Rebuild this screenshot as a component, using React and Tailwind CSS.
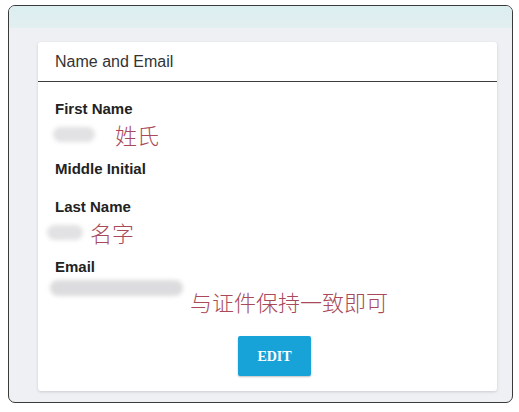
import React from "react"

const Label = ({ children, className = "" }) => (
  <div className={`text-[15px] font-bold leading-[18px] text-[#222] ${className}`}>{children}</div>
)

const Blur = ({ className = "" }) => <div className={`rounded-full bg-[#dcdcde] blur-[2px] ${className}`} />

const Note = ({ children, className = "" }) => (
  <span
    className={`text-[22px] font-light leading-none text-[#a84a5a] ${className}`}
    style={{ fontFamily: '"Noto Sans CJK SC", sans-serif' }}
  >
    {children}
  </span>
)

export default function App() {
  return (
    <div
      className="w-[519px] h-[412px] bg-white pt-[5px] pl-[8px]"
      style={{ fontFamily: '"Liberation Sans", Arial, sans-serif' }}
    >
      <div className="w-[505px] h-[398px] border border-[#3a3a3a] rounded-[7px] overflow-hidden bg-[#eef0f3] flex flex-col">
        <div className="h-[22px] bg-gradient-to-b from-[#dbeef0] to-[#e3eff1] shrink-0" />
        <div className="flex-1 pt-[14px] pl-[29px] pr-[15px] pb-[10px]">
          <div className="h-[349px] bg-white rounded-[3px] shadow-[0_1px_3px_rgba(0,0,0,0.15)]">
            <div className="h-[40px] border-b border-[#3d3d3d] pl-[17px] flex items-center">
              <span className="text-[16px] text-[#333] pt-[1px]">Name and Email</span>
            </div>

            <div className="pl-[17px] pt-[18px]">
              <Label>First Name</Label>
              <div className="flex items-center mt-[5px]">
                <Blur className="w-[42px] h-[15px] -ml-[2px] bg-[#e2e2e4]" />
                <Note className="ml-[20px]">姓氏</Note>
              </div>

              <Label className="mt-[15px]">Middle Initial</Label>

              <Label className="mt-[20px]">Last Name</Label>
              <div className="flex items-center mt-[5px]">
                <Blur className="w-[36px] h-[15px] -ml-[8px] bg-[#e2e2e4]" />
                <Note className="ml-[7px]">名字</Note>
              </div>

              <Label className="mt-[15px]">Email</Label>
              <div className="flex items-start mt-[4px]">
                <Blur className="w-[133px] h-[16px] -ml-[5px] rounded-[8px] bg-[#d8d6da]" />
                <Note className="ml-[7px] mt-[10px]">与证件保持一致即可</Note>
              </div>

              <button
                className="mt-[24px] ml-[183px] w-[73px] h-[40px] bg-[#17a2d8] rounded-[2px] shadow-[0_1px_2px_rgba(0,0,0,0.25)] text-white text-[14px] font-bold"
                style={{ fontFamily: '"Liberation Serif", serif' }}
              >
                EDIT
              </button>
            </div>
          </div>
        </div>
      </div>
    </div>
  )
}
